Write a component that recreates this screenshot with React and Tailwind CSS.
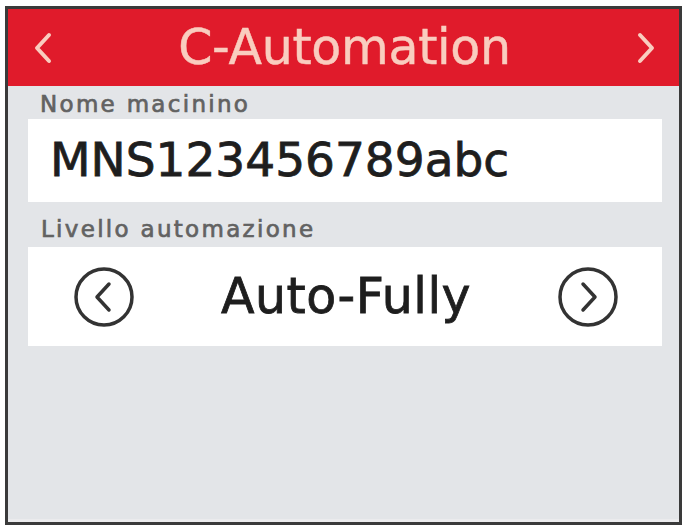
export default function App() {
  return (
    <div className="w-[684px] h-[529px] bg-white pt-[6px] pl-[5px] pr-[2px] pb-[4px]" style={{ fontFamily: '"DejaVu Sans", sans-serif' }}>
      <div className="h-full border-[3px] border-[#3a3a3a] flex flex-col bg-[#e3e5e8]">
        <div className="h-[77px] bg-[#e01b2b] flex items-center justify-between pl-[24px] pr-[22px] text-[#f9cdbf]">
          <svg width="22" height="34" viewBox="0 0 22 34" fill="none" stroke="currentColor" strokeWidth="4" strokeLinecap="round" strokeLinejoin="round">
            <path d="M17 4 L5 17 L17 30" />
          </svg>
          <div className="text-[49px] leading-none tracking-[-0.3px] [-webkit-text-stroke:0.5px_#f9cdbf]">C-Automation</div>
          <svg width="22" height="34" viewBox="0 0 22 34" fill="none" stroke="currentColor" strokeWidth="4" strokeLinecap="round" strokeLinejoin="round">
            <path d="M5 4 L17 17 L5 30" />
          </svg>
        </div>
        <div className="flex-1 pl-[20px] pr-[17px] border-b-[3px] border-[#ebebed]">
          <div className="text-[23px] tracking-[2.3px] text-[#626262] pl-[12px] pt-[7px] h-[33px] leading-[22px] [-webkit-text-stroke:0.7px_#626262]">Nome macinino</div>
          <div className="h-[83px] bg-white flex items-center pl-[22px] text-[47px] text-[#1e1e1e] [-webkit-text-stroke:0.8px_#1e1e1e]">MNS123456789abc</div>
          <div className="text-[23px] tracking-[2.3px] text-[#626262] pl-[13px] pt-[16px] h-[45px] leading-[22px] [-webkit-text-stroke:0.7px_#626262]">Livello automazione</div>
          <div className="h-[99px] bg-white flex items-center justify-between pl-[45px] pr-[43px]">
            <Circle dir="left" />
            <div className="text-[49px] text-[#1e1e1e] tracking-[0.5px] [-webkit-text-stroke:0.8px_#1e1e1e]">Auto-Fully</div>
            <Circle dir="right" />
          </div>
        </div>
      </div>
    </div>
  );
}

function Circle({ dir }) {
  return (
    <svg width="62" height="62" viewBox="0 0 62 62" fill="none" stroke="#333" strokeWidth="3.5" strokeLinecap="round" strokeLinejoin="round">
      <circle cx="31" cy="31" r="28" />
      {dir === 'left' ? <path d="M36 18 L24 31 L36 44" /> : <path d="M26 18 L38 31 L26 44" />}
    </svg>
  );
}
